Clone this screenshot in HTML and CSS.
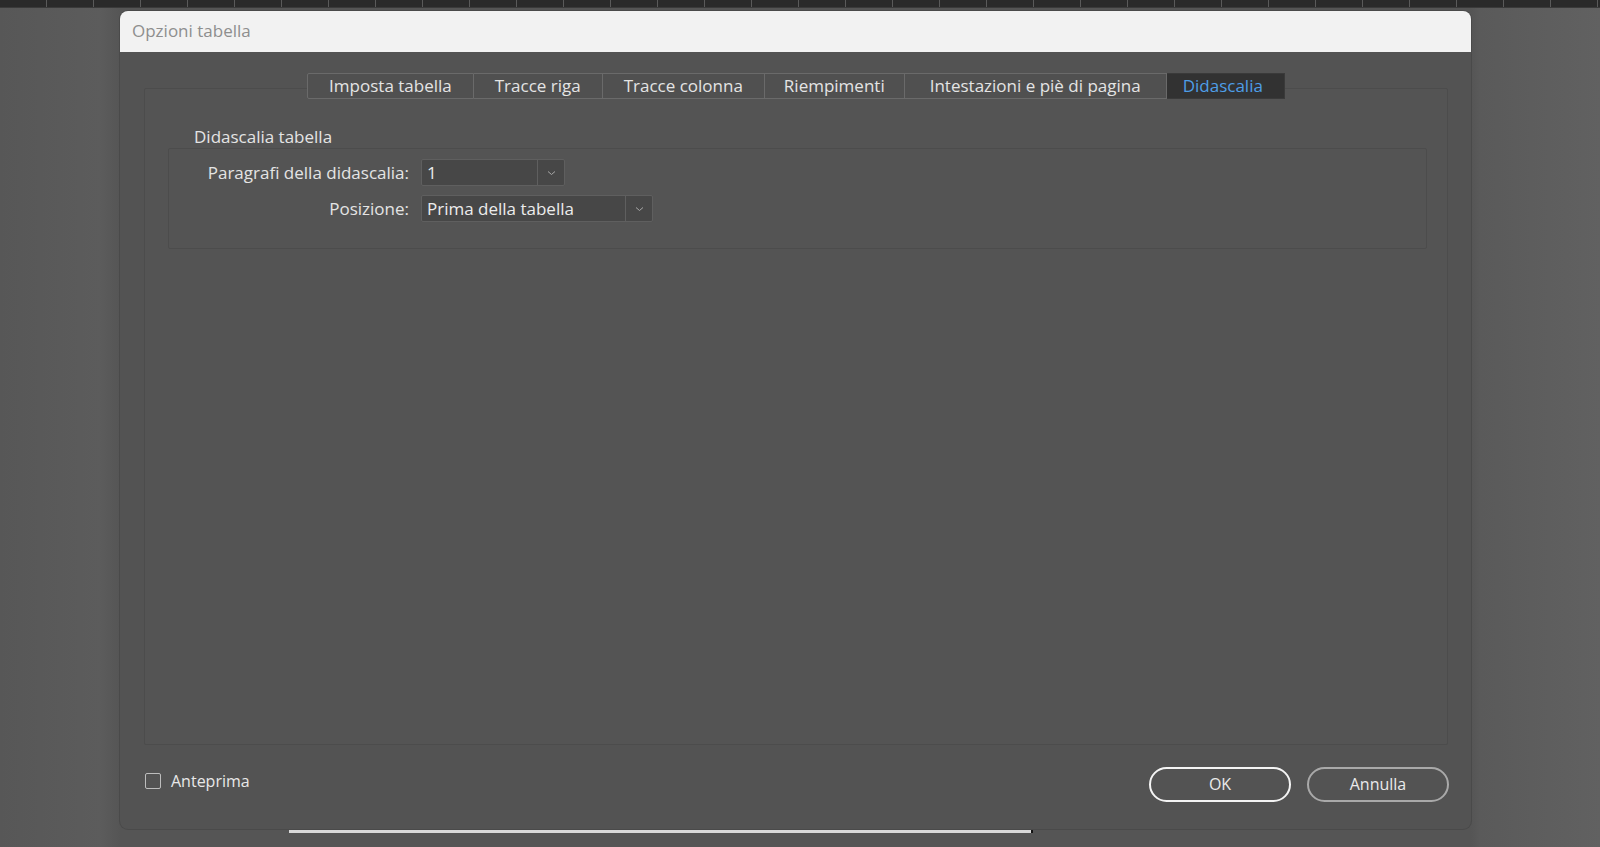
FILE: index.html
```html
<!DOCTYPE html>
<html lang="it">
<head>
  <meta charset="UTF-8" />
  <title>Opzioni tabella</title>
  <link rel="stylesheet" href="styles.css">
</head>
<body>

  <div class="ruler"></div>

  <div class="workspace">
    <div class="doc-edge"></div>

    <div class="dialog">
      <div class="titlebar">Opzioni tabella</div>

      <div class="dialog-body">
        <div class="tabs">
          <div class="tab">Imposta tabella</div>
          <div class="tab">Tracce riga</div>
          <div class="tab">Tracce colonna</div>
          <div class="tab narrow">Riempimenti</div>
          <div class="tab wide">Intestazioni e piè di pagina</div>
          <div class="tab active">Didascalia</div>
        </div>

        <div class="panel">
          <div class="group-label">Didascalia tabella</div>
          <div class="group">
            <div class="field-label">Paragrafi della didascalia:</div>
            <div class="select short">
              <span class="select-value">1</span>
              <span class="select-arrow"><svg width="9" height="6" viewBox="0 0 9 6"><path d="M1 1.5 L4.5 4.5 L8 1.5" fill="none" stroke="#a8a8a8" stroke-width="1"/></svg></span>
            </div>

            <div class="field-label">Posizione:</div>
            <div class="select long">
              <span class="select-value">Prima della tabella</span>
              <span class="select-arrow"><svg width="9" height="6" viewBox="0 0 9 6"><path d="M1 1.5 L4.5 4.5 L8 1.5" fill="none" stroke="#a8a8a8" stroke-width="1"/></svg></span>
            </div>
          </div>
        </div>

        <div class="footer">
          <label class="check"><span class="box"></span>Anteprima</label>
          <div class="buttons">
            <button class="btn primary">OK</button>
            <button class="btn">Annulla</button>
          </div>
        </div>
      </div>
    </div>
  </div>

</body>
</html>
```

FILE: styles.css
```css
* {
  box-sizing: border-box;
}

body {
  margin: 0;
  height: 847px;
  overflow: hidden;
  font-family: "Open Sans", "Noto Sans", sans-serif;
  background: linear-gradient(to right, #575757 0px, #5c5c5c 100px, #555555 121px, #555555 1471px, #5a5a5a 1480px, #616161 1600px);
}

.ruler {
  height: 8px;
  background-color: #2a2a2a;
  background-image: repeating-linear-gradient(to right, transparent 0px, transparent 46px, #5a5a5a 46px, #5a5a5a 47px);
  border-bottom: 1px solid #3a3a3a;
}

.workspace {
  position: relative;
  padding: 3px 0 0 120px;
}

/* page edge visible under the dialog */
.doc-edge {
  position: absolute;
  left: 289px;
  top: 822px;
  width: 744px;
  height: 3px;
  background: #d9d9d9;
  border-right: 2px solid #111;
}

.dialog {
  position: relative;
  width: 1351px;
  height: 818px;
  border-radius: 8px;
  background: #535353;
  box-shadow: 0 0 0 1px #4a4a4a;
  display: flex;
  flex-direction: column;
}

.titlebar {
  height: 41px;
  line-height: 40px;
  padding-left: 12px;
  background: #f2f2f2;
  color: #8e8e8e;
  font-size: 17px;
  border-radius: 8px 8px 0 0;
}

.dialog-body {
  flex: 1;
  display: flex;
  flex-direction: column;
  padding: 21px 23px 0 24px;
}

.tabs {
  display: flex;
  justify-content: center;
  margin-bottom: -11px;
  position: relative;
  z-index: 1;
}

.tab {
  height: 26px;
  line-height: 24px;
  padding: 0 21px;
  font-size: 17px;
  color: #e4e4e4;
  background: #505050;
  border: 1px solid #6a6a6a;
  border-left: none;
}

.tab:first-child {
  border-left: 1px solid #6a6a6a;
  border-radius: 2px 0 0 2px;
}

.tab.narrow {
  padding: 0 19px;
}

.tab.wide {
  padding: 0 25px;
}

.tab.active {
  background: #323232;
  color: #4e9ee8;
  border-color: #3a3a3a;
  padding: 0 21px 0 16px;
}

.panel {
  height: 657px;
  border: 1px solid #4c4c4c;
  border-radius: 2px;
  background: #545454;
  padding: 37px 20px 0 23px;
}

.group-label {
  font-size: 17px;
  color: #e4e4e4;
  padding-left: 26px;
  height: 22px;
  line-height: 22px;
}

.group {
  display: grid;
  grid-template-columns: 228px auto;
  justify-content: start;
  align-content: start;
  align-items: center;
  column-gap: 12px;
  row-gap: 9px;
  height: 101px;
  padding: 10px 0 0 12px;
  border: 1px solid #4c4c4c;
  border-radius: 2px;
}

.field-label {
  text-align: right;
  font-size: 17px;
  color: #e4e4e4;
}

.select {
  display: flex;
  height: 27px;
  border: 1px solid #5f5f5f;
  background: #474747;
  border-radius: 2px;
}

.select.short {
  width: 144px;
}

.select.long {
  width: 232px;
}

.select-value {
  flex: 1;
  padding-left: 5px;
  line-height: 25px;
  font-size: 17px;
  color: #ececec;
}

.select-arrow {
  width: 27px;
  border-left: 1px solid #5f5f5f;
  display: flex;
  align-items: center;
  justify-content: center;
}

.footer {
  flex: 1;
  display: flex;
  align-items: center;
  justify-content: space-between;
  padding-bottom: 6px;
}

.check {
  display: flex;
  align-items: center;
  font-size: 16px;
  color: #e8e8e8;
  margin: 0 0 6px 1px;
}

.check .box {
  width: 16px;
  height: 16px;
  border: 1.5px solid #bdbdbd;
  border-radius: 2px;
  margin-right: 10px;
}

.buttons {
  display: flex;
  gap: 16px;
  margin-right: -1px;
}

.btn {
  width: 142px;
  height: 35px;
  border-radius: 18px;
  background: transparent;
  border: 2px solid #a9a9a9;
  color: #eaeaea;
  font-family: "Open Sans", "Noto Sans", sans-serif;
  font-size: 16px;
  cursor: pointer;
}

.btn.primary {
  border-color: #f4f4f4;
}
```
